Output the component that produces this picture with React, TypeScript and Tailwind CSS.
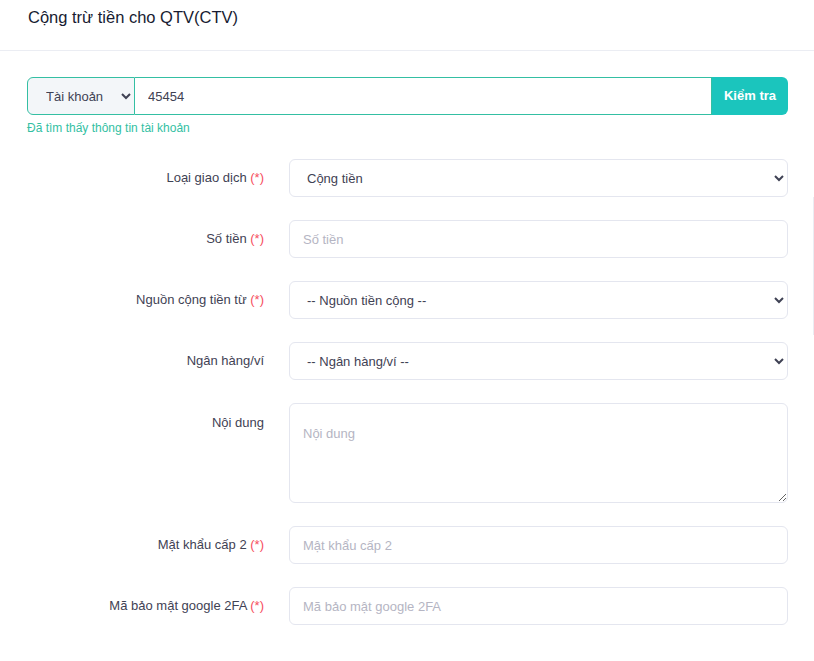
import React from "react";

const font = { fontFamily: '"Liberation Sans", Arial, sans-serif' };

function Req() {
  return <span className="text-[#f64e60]"> (*)</span>;
}

function Row({ label, required, children, tall }: { label: string; required?: boolean; children: React.ReactNode; tall?: boolean }) {
  return (
    <div className="grid grid-cols-[237px_1fr] gap-x-[25px]">
      <label className={`text-right text-[13px] text-[#3f4254] ${tall ? "pt-[10px]" : "pt-[9px]"}`}>
        {label}
        {required && <Req />}
      </label>
      <div>{children}</div>
    </div>
  );
}

const inputCls =
  "w-full h-[38px] rounded-[6px] border border-[#e4e6ef] bg-white px-[13px] text-[13px] text-[#3f4254] placeholder:text-[#b5b5c3] outline-none";
const selectCls =
  "w-full h-[38px] rounded-[6px] border border-[#e4e6ef] bg-white pl-[13px] pr-[8px] text-[13px] text-[#3f4254] outline-none";

export default function App() {
  return (
    <div className="relative w-[814px] h-[661px] bg-white overflow-hidden" style={font}>
      <div className="h-[51px] border-b border-[#ebedf3] px-[28px] pt-[5px]">
        <h3 className="text-[16.5px] text-[#181c32]">Cộng trừ tiền cho QTV(CTV)</h3>
      </div>

      <div className="pl-[27px] pr-[26px] pt-[26px]">
        <div className="flex h-[38px]">
          <select
            defaultValue="acc"
            className="w-[108px] h-full rounded-l-[6px] border border-[#34bfa3] bg-[#f3f6f9] pl-[14px] pr-[6px] text-[13px] text-[#3f4254] outline-none"
          >
            <option value="acc">Tài khoản</option>
          </select>
          <input
            defaultValue="45454"
            className="flex-1 h-full border-y border-r border-[#34bfa3] bg-white px-[13px] text-[13px] text-[#3f4254] outline-none"
          />
          <button className="w-[76px] h-full rounded-r-[6px] bg-[#1bc5bd] text-[13px] font-bold text-white">
            Kiểm tra
          </button>
        </div>
        <div className="mt-[4px] text-[12px] text-[#34bfa3]">Đã tìm thấy thông tin tài khoản</div>

        <div className="mt-[22px] flex flex-col gap-[23px]">
          <Row label="Loại giao dịch" required>
            <select defaultValue="add" className={selectCls}>
              <option value="add">Cộng tiền</option>
            </select>
          </Row>
          <Row label="Số tiền" required>
            <input className={inputCls} placeholder="Số tiền" />
          </Row>
          <Row label="Nguồn cộng tiền từ" required>
            <select defaultValue="" className={selectCls}>
              <option value="">-- Nguồn tiền cộng --</option>
            </select>
          </Row>
          <Row label="Ngân hàng/ví">
            <select defaultValue="" className={selectCls}>
              <option value="">-- Ngân hàng/ví --</option>
            </select>
          </Row>
          <Row label="Nội dung" tall>
            <textarea
              className="block w-full h-[100px] rounded-[6px] border border-[#e4e6ef] bg-white px-[13px] pt-[20px] pb-[9px] text-[13px] text-[#3f4254] placeholder:text-[#b5b5c3] outline-none"
              placeholder="Nội dung"
            />
          </Row>
          <Row label="Mật khẩu cấp 2" required>
            <input className={inputCls} placeholder="Mật khẩu cấp 2" />
          </Row>
          <Row label="Mã bảo mật google 2FA" required>
            <input className={inputCls} placeholder="Mã bảo mật google 2FA" />
          </Row>
        </div>
      </div>

      <div className="absolute right-0 top-[197px] h-[138px] w-px bg-[#ebedf3]" />
    </div>
  );
}
